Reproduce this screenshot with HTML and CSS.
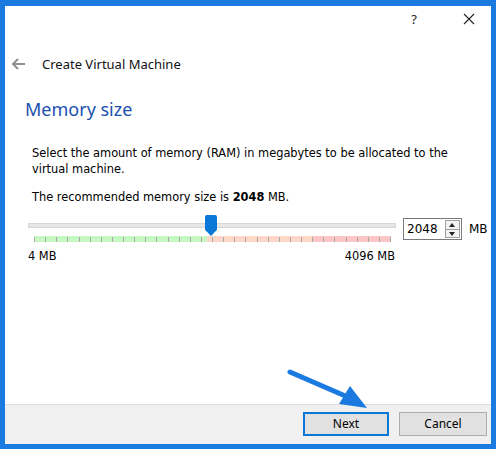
FILE: index.html
```html
<!DOCTYPE html>
<html lang="en">
<head>
  <meta charset="UTF-8" />
  <title>Create Virtual Machine</title>
  <link rel="stylesheet" href="styles.css">
</head>
<body>

  <div class="window">

    <div class="titlebar">
      <span class="tb-help">?</span>
      <span class="tb-close">
        <svg viewBox="0 0 12 12" width="12" height="12" aria-hidden="true">
          <path d="M1 1L11 11M11 1L1 11" stroke="#222" stroke-width="1.1" fill="none"/>
        </svg>
      </span>
    </div>

    <div class="wizard-head">
      <svg class="back" viewBox="0 0 16 14" width="16" height="14" aria-hidden="true">
        <path d="M15 7H3M8 2L3 7L8 12" stroke="#8f8f8f" stroke-width="2" fill="none"/>
      </svg>
      <span class="wizard-title">Create Virtual Machine</span>
    </div>

    <div class="page">
      <h1>Memory size</h1>

      <div class="content">
        <p class="desc">Select the amount of memory (RAM) in megabytes to be allocated to the virtual machine.</p>
        <p class="recommend">The recommended memory size is <b>2048</b> MB.</p>

        <div class="slider-row">
          <div class="slider">
            <div class="groove"></div>
            <div class="scale">
              <div class="zone green"></div>
              <div class="zone orange"></div>
              <div class="zone red"></div>
              <div class="ticks">
                <i></i><i></i><i></i><i></i><i></i><i></i><i></i><i></i><i></i><i></i><i></i>
                <i></i><i></i><i></i><i></i><i></i><i></i><i></i><i></i><i></i><i></i><i></i>
                <i></i><i></i><i></i><i></i><i></i><i></i><i></i><i></i><i></i><i></i><i></i>
              </div>
            </div>
            <div class="thumb"></div>
          </div>

          <div class="spinbox">
            <span class="spin-value">2048</span>
            <span class="spin-btns">
              <span class="spin-up"></span>
              <span class="spin-down"></span>
            </span>
          </div>
          <span class="unit">MB</span>
        </div>

        <div class="range-labels">
          <span>4 MB</span>
          <span>4096 MB</span>
        </div>
      </div>
    </div>

    <div class="footer">
      <button class="btn btn-default">Next</button>
      <button class="btn">Cancel</button>
    </div>

    <!-- annotation arrow -->
    <svg class="pointer" viewBox="0 0 496 449" width="496" height="449" aria-hidden="true">
      <line x1="290" y1="372" x2="350" y2="398" stroke="#1b7ae0" stroke-width="5" stroke-linecap="round"/>
      <polygon points="367,408 339,404 350,386" fill="#1b7ae0"/>
    </svg>
  </div>

</body>
</html>
```

FILE: styles.css
```css
/* Base */
html, body {
  margin: 0;
  padding: 0;
  background: #fff;
}

.window {
  position: relative;
  width: 496px;
  height: 449px;
  box-sizing: border-box;
  border: 5px solid #1b7ae0;
  border-top-width: 6px;
  background: #fff;
  display: flex;
  flex-direction: column;
  font-family: 'DejaVu Sans', sans-serif;
  color: #000;
}

/* Title bar */
.titlebar {
  height: 25px;
  display: flex;
  justify-content: flex-end;
  align-items: center;
  padding-right: 16px;
  gap: 46px;
  font-family: 'Noto Sans', sans-serif;
}
.tb-help {
  font-size: 13px;
  color: #222;
}
.tb-close {
  display: flex;
  align-items: center;
}

/* Wizard header */
.wizard-head {
  display: flex;
  align-items: center;
  height: 24px;
  margin-top: 21px;
  padding-left: 5px;
}
.back {
  margin-right: 16px;
}
.wizard-title {
  font-family: 'Noto Sans', sans-serif;
  font-size: 13px;
  color: #111;
}

/* Page */
.page {
  flex: 1;
  padding-left: 20px;
}
h1 {
  margin: 21px 0 0 0;
  font-family: 'Noto Sans', sans-serif;
  font-weight: 400;
  font-size: 18px;
  line-height: 24px;
  color: #1a4fb0;
}

.content {
  padding-left: 7px;
  padding-right: 20px;
}
.desc {
  margin: 24px 0 0 0;
  font-size: 11.4px;
  line-height: 16px;
}
.recommend {
  margin: 12px 0 0 0;
  font-size: 11.4px;
  line-height: 16px;
}

/* Slider */
.slider-row {
  display: flex;
  align-items: center;
  margin-top: 12px;
  margin-left: -4px;
  height: 24px;
}
.slider {
  position: relative;
  flex-shrink: 0;
  width: 368px;
  height: 24px;
}
.groove {
  position: absolute;
  left: 0; right: 0;
  top: 6px;
  height: 3px;
  background: #e7e7e7;
  border: 1px solid #d6d6d6;
}
.scale {
  position: absolute;
  left: 6px;
  top: 19px;
  width: 357px;
  height: 6px;
  display: flex;
}
.zone {
  height: 6px;
}
.zone.green { width: 173px; background: #c5f7c0; }
.zone.orange { width: 105px; background: #fdd8c7; }
.zone.red { width: 79px; background: #fdc6c6; }
.ticks {
  position: absolute;
  inset: 0;
  display: flex;
  justify-content: space-between;
}
.ticks i {
  width: 1px;
  height: 5px;
  margin-top: 1px;
  background: #a8a8a8;
}
.thumb {
  position: absolute;
  left: 177px;
  top: -2px;
  width: 12px;
  height: 21px;
  background: #0a78d6;
  clip-path: polygon(0 0, 100% 0, 100% 70%, 50% 100%, 0 70%);
  border-radius: 2px 2px 0 0;
}

.spinbox {
  margin-left: 7px;
  width: 59px;
  height: 22px;
  flex-shrink: 0;
  box-sizing: border-box;
  border: 1px solid #7a7a7a;
  display: flex;
  align-items: center;
  justify-content: space-between;
  padding: 1px 1px 1px 3px;
  background: #fff;
}
.spin-value {
  font-size: 12px;
}
.spin-btns {
  width: 15px;
  height: 18px;
  display: flex;
  flex-direction: column;
  border: 1px solid #a0a0a0;
  box-sizing: border-box;
  background: #f2f2f2;
}
.spin-up, .spin-down {
  flex: 1;
  position: relative;
}
.spin-up {
  border-bottom: 1px solid #a0a0a0;
}
.spin-up::after, .spin-down::after {
  content: '';
  position: absolute;
  left: 3px;
  border-left: 3.5px solid transparent;
  border-right: 3.5px solid transparent;
}
.spin-up::after {
  top: 2px;
  border-bottom: 4px solid #222;
}
.spin-down::after {
  top: 2px;
  border-top: 4px solid #222;
}
.unit {
  margin-left: 7px;
  font-size: 12px;
}

.range-labels {
  display: flex;
  justify-content: space-between;
  width: 367px;
  margin-left: -4px;
  margin-top: 8px;
  font-size: 11.4px;
  line-height: 15px;
}

/* Footer */
.footer {
  height: 40px;
  background: #f0f0f0;
  border-top: 1px solid #dfdfdf;
  display: flex;
  justify-content: flex-end;
  align-items: center;
  gap: 10px;
  padding-right: 4px;
  padding-bottom: 2px;
  box-sizing: border-box;
}
.btn {
  width: 88px;
  height: 24px;
  background: #e1e1e1;
  border: 1px solid #adadad;
  font-family: 'Noto Sans', sans-serif;
  font-size: 12px;
  color: #000;
  padding: 0;
}
.btn-default {
  width: 86px;
  border: 2px solid #0a78d6;
}

.pointer {
  position: absolute;
  left: -5px;
  top: -6px;
  pointer-events: none;
}
```
